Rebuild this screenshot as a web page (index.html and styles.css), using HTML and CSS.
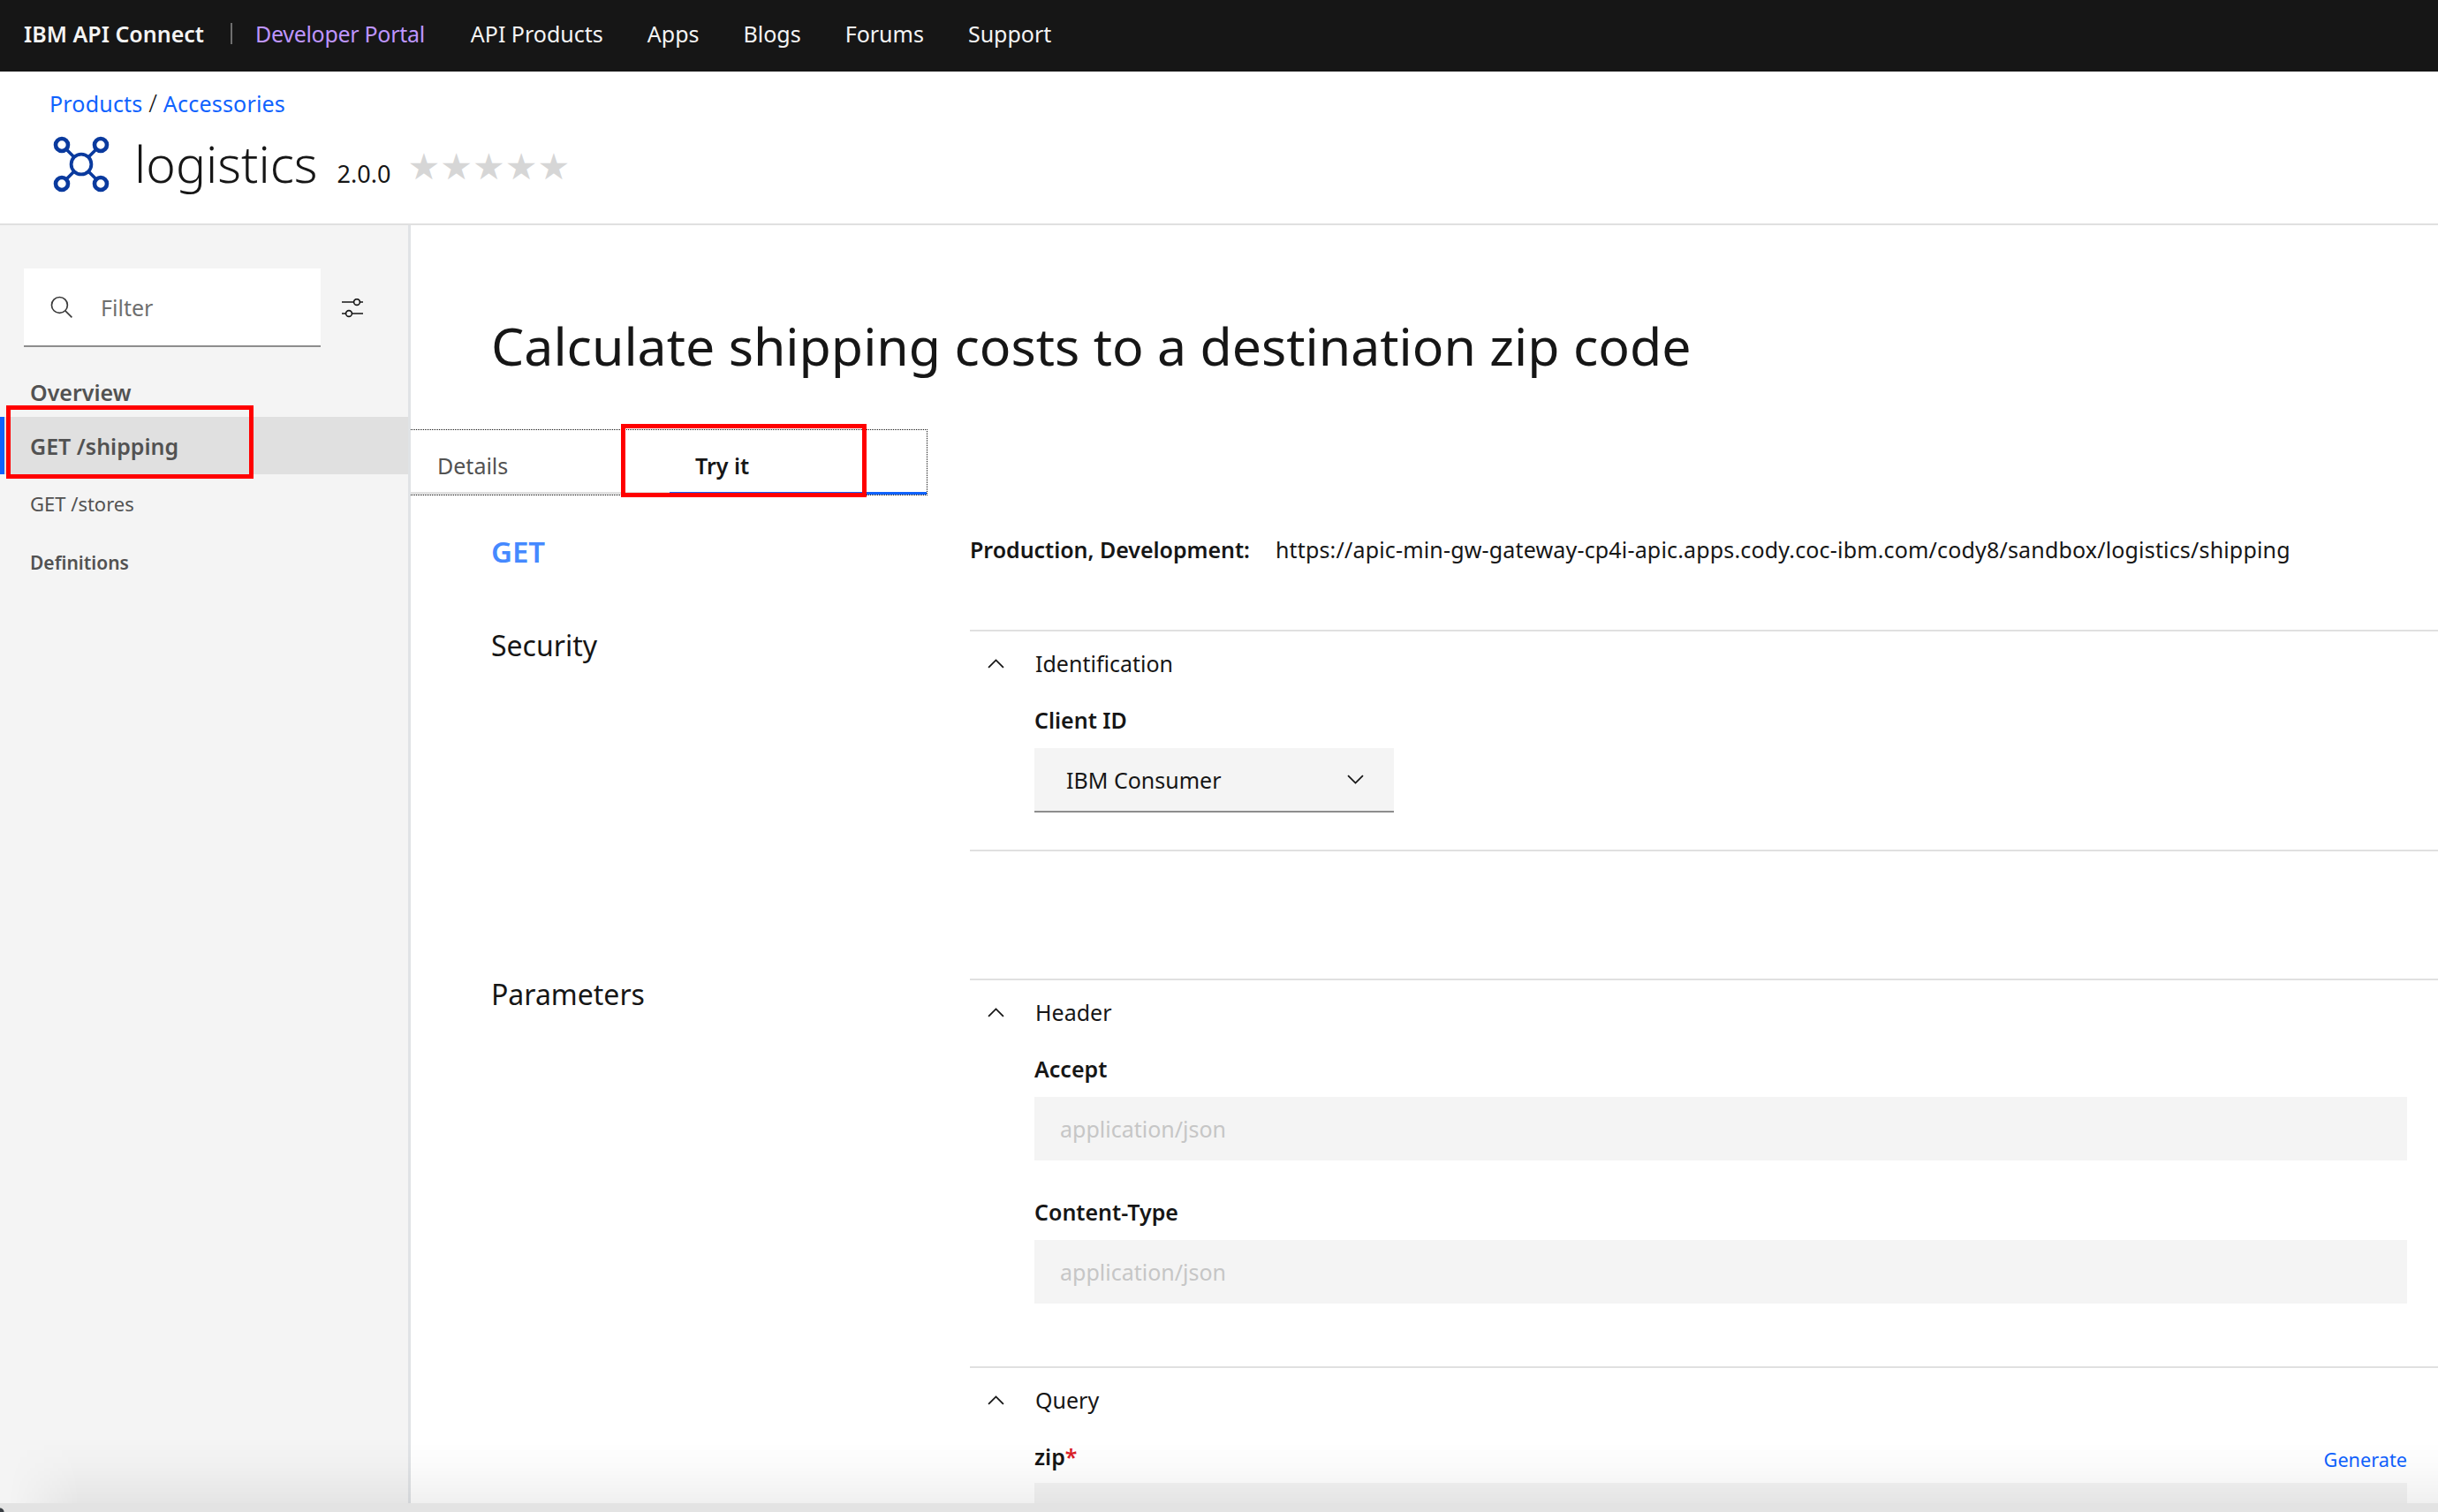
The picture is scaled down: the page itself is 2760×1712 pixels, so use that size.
FILE: index.html
```html
<!DOCTYPE html>
<html lang="en">
  <head>
    <meta charset="UTF-8" />
    <meta name="viewport" content="width=device-width, initial-scale=1.0" />
    <title>logistics - Developer Portal</title>
    <link rel="stylesheet" href="styles.css">
  </head>
  <body>
    <header class="topbar">
      <span class="brand">IBM API Connect</span>
      <span class="brand-sep"></span>
      <a class="portal" href="#">Developer Portal</a>
      <nav class="topnav">
        <a href="#">API Products</a>
        <a href="#">Apps</a>
        <a href="#">Blogs</a>
        <a href="#">Forums</a>
        <a href="#">Support</a>
      </nav>
    </header>

    <section class="product">
      <div class="crumbs"><a href="#">Products</a> <span class="crumb-sep">/</span> <a href="#">Accessories</a></div>
      <div class="product-title">
        <svg class="logo" viewBox="0 0 64 64" fill="none" stroke="#0a3a9e">
          <g stroke-width="4.6">
            <circle cx="10" cy="10" r="7" />
            <circle cx="54" cy="10" r="7" />
            <circle cx="10" cy="54" r="7" />
            <circle cx="54" cy="54" r="7" />
          </g>
          <circle cx="32" cy="32" r="11.4" stroke-width="3.8" />
          <path stroke-width="3.6" d="M15 15L24 24M49 15L40 24M15 49L24 40M49 49L40 40" />
        </svg>
        <h1>logistics</h1>
        <span class="version">2.0.0</span>
        <div class="stars">★★★★★</div>
      </div>
    </section>

    <div class="layout">
      <aside class="sidebar">
        <div class="filter-row">
          <div class="filter">
            <svg class="icon" viewBox="0 0 24 24" fill="none" stroke="#393939" stroke-width="1.6">
              <circle cx="10" cy="10" r="8.6" />
              <path d="M16.2 16.2L23.4 23.4" />
            </svg>
            <span>Filter</span>
          </div>
          <svg class="sliders" viewBox="0 0 24 22" fill="none" stroke="#161616" stroke-width="1.6">
            <path d="M0 4H13M21 4H24M0 17H4M12 17H24" />
            <circle cx="17" cy="4" r="3.4" />
            <circle cx="8" cy="17" r="3.4" />
          </svg>
        </div>
        <a class="side-link side-head" href="#">Overview</a>
        <a class="side-link side-active" href="#">GET /shipping</a>
        <a class="side-link side-small" href="#">GET /stores</a>
        <a class="side-link side-small side-bold" href="#">Definitions</a>
      </aside>

      <main class="content">
        <h2 class="op-title">Calculate shipping costs to a destination zip code</h2>
        <div class="tabs">
          <a class="tab" href="#">Details</a>
          <a class="tab tab-active" href="#">Try it</a>
        </div>

        <div class="op-row">
          <div class="op-method">GET</div>
          <div class="op-url">
            <strong>Production, Development:</strong>
            <span>https://apic-min-gw-gateway-cp4i-apic.apps.cody.coc-ibm.com/cody8/sandbox/logistics/shipping</span>
          </div>
        </div>

        <div class="op-row op-security">
          <div class="op-side">Security</div>
          <div class="panel panel-id">
            <div class="panel-head">
              <svg class="chevron" viewBox="0 0 18 10" fill="none" stroke="#161616" stroke-width="1.7"><path d="M1 9.2L9 1.2L17 9.2" /></svg>
              <span>Identification</span>
            </div>
            <label class="field-label">Client ID</label>
            <div class="select">
              <span>IBM Consumer</span>
              <svg class="chevron" viewBox="0 0 18 10" fill="none" stroke="#161616" stroke-width="1.7"><path d="M1 .8L9 8.8L17 .8" /></svg>
            </div>
          </div>
        </div>

        <div class="op-row op-params">
          <div class="op-side">Parameters</div>
          <div>
            <div class="panel panel-header">
              <div class="panel-head">
                <svg class="chevron" viewBox="0 0 18 10" fill="none" stroke="#161616" stroke-width="1.7"><path d="M1 9.2L9 1.2L17 9.2" /></svg>
                <span>Header</span>
              </div>
              <label class="field-label">Accept</label>
              <div class="input">application/json</div>
              <label class="field-label label-gap">Content-Type</label>
              <div class="input">application/json</div>
            </div>
            <div class="panel panel-query">
              <div class="panel-head">
                <svg class="chevron" viewBox="0 0 18 10" fill="none" stroke="#161616" stroke-width="1.7"><path d="M1 9.2L9 1.2L17 9.2" /></svg>
                <span>Query</span>
              </div>
              <div class="label-row">
                <label class="field-label">zip<span class="req">*</span></label>
                <a class="generate" href="#">Generate</a>
              </div>
              <div class="input"></div>
            </div>
          </div>
        </div>
      </main>
    </div>

    <!-- annotations drawn on top of the screenshot -->
    <div class="mark mark-side"></div>
    <div class="mark mark-tab"></div>
    <div class="window-shadow"></div>
    <div class="window-edge"></div>
  </body>
</html>
```

FILE: styles.css
```css
* {
  box-sizing: border-box;
  margin: 0;
  padding: 0;
}

html,
body {
  height: 1712px;
  overflow: hidden;
}

body {
  position: relative;
  font-family: "Noto Sans", "Open Sans", sans-serif;
  color: #161616;
  background-color: #ffffff;
  display: flex;
  flex-direction: column;
}

a {
  text-decoration: none;
}

.topbar {
  height: 81px;
  flex: none;
  display: flex;
  align-items: center;
  padding: 0 0 6px 27px;
  background-color: #161616;
  color: #f4f4f4;
  font-size: 25px;
}

.brand {
  font-weight: 600;
}

.brand-sep {
  width: 2px;
  height: 24px;
  margin: 0 26px 0 30px;
  background-color: #6f6f6f;
}

.portal {
  color: #be95ff;
  letter-spacing: -0.3px;
}

.topnav {
  display: flex;
  gap: 50px;
  margin-left: 52px;
}

.topnav a {
  color: #f4f4f4;
}

.product {
  height: 174px;
  flex: none;
  padding: 18px 0 0 56px;
  border-bottom: 2px solid #e0e0e0;
}

.crumbs {
  font-size: 25px;
  line-height: 34px;
  letter-spacing: 0.2px;
}

.crumbs a {
  color: #0f62fe;
}

.crumb-sep {
  font-size: 28px;
  font-weight: 300;
}

.product-title {
  display: flex;
  align-items: flex-start;
  margin-top: 20px;
}

.logo {
  width: 64px;
  height: 64px;
  margin-left: 4px;
}

.product-title h1 {
  margin: -2px 0 0 28px;
  font-size: 57px;
  font-weight: 300;
  line-height: 66px;
}

.version {
  margin: 24px 0 0 22px;
  font-size: 27px;
}

.stars {
  margin: 11px 0 0 19px;
  font-size: 41px;
  line-height: 48px;
  color: #d6d6d6;
  font-family: "DejaVu Sans", sans-serif;
}

.layout {
  flex: 1;
  display: flex;
  min-height: 0;
}

.sidebar {
  width: 465px;
  flex: none;
  background-color: #f4f4f4;
  border-right: 3px solid #e0e3e6;
  padding-top: 49px;
}

.filter-row {
  display: flex;
  align-items: center;
  padding-left: 27px;
}

.filter {
  width: 336px;
  height: 89px;
  display: flex;
  align-items: center;
  padding-left: 30px;
  background-color: #ffffff;
  border-bottom: 2px solid #8d8d8d;
  font-size: 25px;
  color: #6f6f6f;
}

.filter .icon {
  width: 25px;
  height: 25px;
  margin-right: 32px;
}

.sliders {
  width: 24px;
  height: 22px;
  margin-left: 24px;
}

.side-link {
  display: block;
  padding-left: 34px;
  color: #525252;
}

.side-head {
  margin-top: 28px;
  padding-bottom: 5px;
  font-size: 25px;
  font-weight: 600;
  line-height: 46px;
}

.side-active {
  height: 65px;
  line-height: 66px;
  font-size: 25px;
  font-weight: 600;
  background-color: #e0e0e0;
  box-shadow: inset 5px 0 0 #0f62fe;
}

.side-small {
  height: 66px;
  line-height: 66px;
  font-size: 22px;
}

.side-bold {
  font-size: 21px;
  line-height: 68px;
  font-weight: 600;
}

.content {
  flex: 1;
  min-width: 0;
}

.op-title {
  margin: 100px 0 0 91px;
  font-size: 59px;
  font-weight: 400;
  line-height: 72px;
}

.tabs {
  display: flex;
  width: 585px;
  height: 75px;
  margin-top: 59px;
  border-top: 1px dotted #161616;
  border-right: 1px dotted #161616;
  border-bottom: 1px dotted #161616;
  box-shadow: inset 0 -3px 0 #e0e0e0;
}

.tab {
  height: 73px;
  line-height: 80px;
  font-size: 25px;
  color: #525252;
  padding-left: 30px;
  width: 293px;
}

.tab-active {
  flex: 1;
  padding-left: 29px;
  color: #161616;
  font-weight: 600;
  box-shadow: inset 0 -3px 0 #0f62fe;
}

.op-row {
  display: grid;
  grid-template-columns: 542px 1fr;
  padding-left: 91px;
}

.op-method {
  padding-top: 41px;
  font-size: 33px;
  font-weight: 600;
  color: #4589ff;
}

.op-url {
  padding-top: 41px;
  font-size: 25px;
  line-height: 40px;
  height: 152px;
  display: flex;
  gap: 29px;
}

.op-url strong {
  font-weight: 600;
  letter-spacing: -0.04px;
}

.op-url span {
  letter-spacing: 0.17px;
}

.op-side {
  padding-top: 0;
  font-size: 32px;
  line-height: 36px;
}

.panel {
  border-top: 2px solid #e0e0e0;
}

.panel-head {
  display: flex;
  align-items: center;
  gap: 35px;
  height: 60px;
  padding-left: 20px;
  margin: 6px 0 14px;
  font-size: 25px;
}

.chevron {
  width: 19px;
  height: 11px;
}

.field-label {
  display: block;
  margin-left: 73px;
  font-size: 25px;
  font-weight: 600;
  line-height: 40px;
}

.select {
  width: 407px;
  height: 73px;
  margin: 12px 0 0 73px;
  padding: 0 34px 0 36px;
  display: flex;
  align-items: center;
  justify-content: space-between;
  background-color: #f4f4f4;
  border-bottom: 2px solid #8d8d8d;
  font-size: 25px;
}

.panel-id {
  height: 251px;
  border-bottom: 2px solid #e0e0e0;
  margin-bottom: 144px;
}

.input {
  height: 72px;
  margin: 12px 35px 0 73px;
  padding-left: 29px;
  line-height: 72px;
  background-color: #f4f4f4;
  color: #c6c6c6;
  font-size: 25px;
}

.label-gap {
  margin-top: 38px;
}

.panel-query .input {
  margin-top: 10px;
}

.panel-header {
  height: 439px;
}

.label-row {
  display: flex;
  align-items: flex-end;
  justify-content: space-between;
  padding-right: 35px;
}

.req {
  color: #da1e28;
}

.generate {
  color: #0f62fe;
  font-size: 21.7px;
  line-height: 32px;
}

.mark {
  position: absolute;
  border: 5px solid #ff0000;
}

.mark-side {
  left: 7px;
  top: 459px;
  width: 280px;
  height: 83px;
}

.mark-tab {
  left: 703px;
  top: 480px;
  width: 278px;
  height: 83px;
}

.window-shadow {
  position: absolute;
  left: 0;
  right: 0;
  bottom: 10px;
  height: 70px;
  background: linear-gradient(rgba(0, 0, 0, 0), rgba(0, 0, 0, 0.015) 40%, rgba(0, 0, 0, 0.06));
  -webkit-mask-image: linear-gradient(to right, transparent 10px, #000 90px);
  mask-image: linear-gradient(to right, transparent 10px, #000 90px);
  pointer-events: none;
}

.window-edge {
  position: absolute;
  left: 0;
  right: 0;
  bottom: 0;
  height: 10px;
  background: radial-gradient(circle at 0 100%, #3a3f44 4px, transparent 5px), #e3e3e3;
}
```
